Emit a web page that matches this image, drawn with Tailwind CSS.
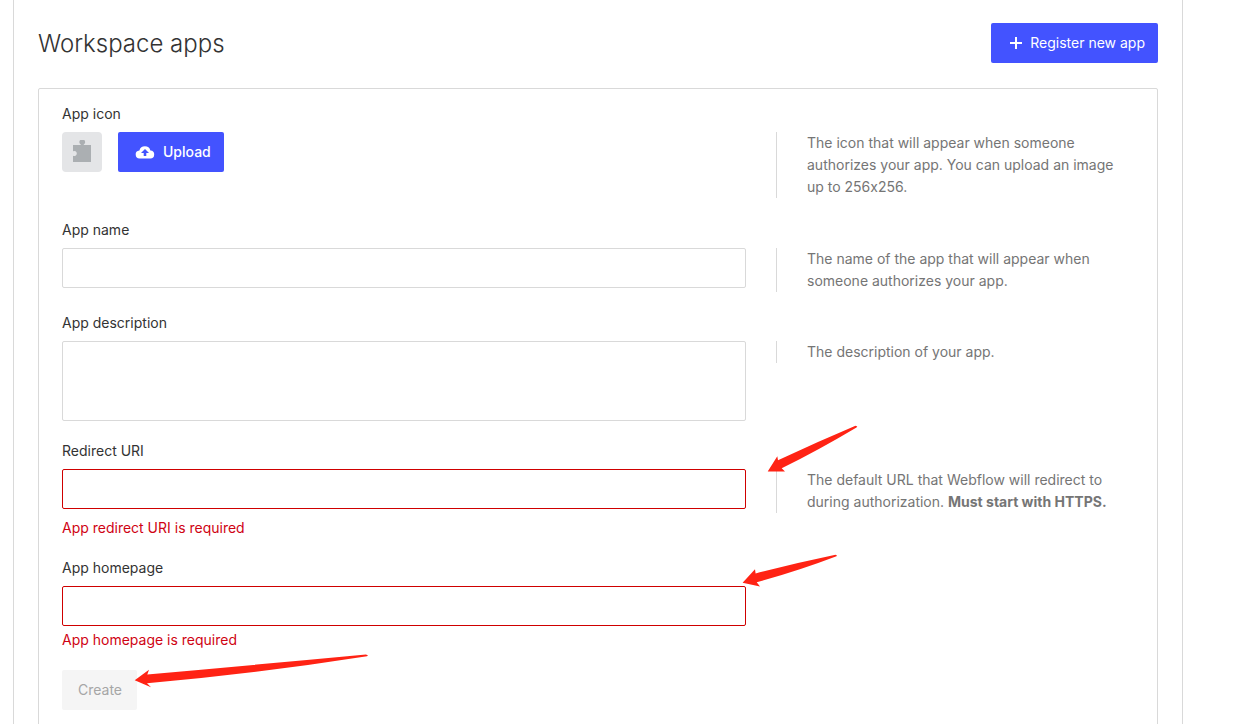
<!DOCTYPE html>
<html lang="en">
  <head>
    <meta charset="UTF-8" />
    <meta name="viewport" content="width=device-width, initial-scale=1.0" />
    <title>Workspace apps</title>
    <script src="https://cdn.jsdelivr.net/npm/@tailwindcss/browser@4"></script>
  </head>
  <body
    class="bg-white font-['Inter',sans-serif] text-sm text-[#333333] overflow-hidden [font-feature-settings:'calt'_0]"
  >
    <main class="ml-[13px] mr-[66px] min-h-screen border-x border-[#d9d9d9] px-6 pt-[23px]">
      <header class="flex items-center justify-between">
        <h1 class="pt-0.5 text-2xl font-light">Workspace apps</h1>
        <button
          type="button"
          class="flex h-10 items-center gap-1.5 rounded-xs bg-[#4353ff] pl-[17px] pr-[13px] text-white hover:bg-[#3545ee]"
        >
          <svg class="size-4" viewBox="0 0 16 16" fill="currentColor" aria-hidden="true">
            <path d="M7 2h2v5h5v2H9v5H7V9H2V7h5z" />
          </svg>
          Register new app
        </button>
      </header>

      <form class="mt-[25px] flex flex-col gap-5 rounded-xs border border-[#d9d9d9] px-[23px] pt-[15px] pb-6">
        <!-- App icon -->
        <div class="min-h-24">
          <label for="upload" class="block leading-5">App icon</label>
          <div class="mt-2 grid grid-cols-[minmax(0,1fr)_358px] items-start gap-[30px]">
            <div class="flex items-center gap-4">
              <div class="flex size-10 items-center justify-center rounded-sm bg-[#e4e5e7]">
                <svg class="h-6 w-5" viewBox="0 0 20 24" fill="#abafb2" aria-hidden="true">
                  <path
                    d="M1 5h7.800V4.600a2.900 2.900 0 1 1 2.900 0V5H19v17H1v-6.200a2.600 2.600 0 1 0 0-4.600z"
                  />
                </svg>
              </div>
              <button
                type="button"
                id="upload"
                class="flex h-10 items-center gap-2 rounded-xs bg-[#4353ff] pl-[17px] pr-[13px] font-medium text-white hover:bg-[#3545ee]"
              >
                <svg class="h-5 w-5" viewBox="0 0 20 20" aria-hidden="true">
                  <path
                    fill="currentColor"
                    d="M5 16.500a4 4 0 0 1-.6-8A5.700 5.700 0 0 1 15.400 8.500a4 4 0 0 1-.4 8z"
                  />
                  <path fill="#4353ff" d="M10 7l4 4h-2.700v3H8.700v-3H6z" />
                </svg>
                Upload
              </button>
            </div>
            <p class="border-l border-[#d9d9d9] pl-[30px] leading-[22px] text-[#757575]">
              The icon that will appear when someone authorizes your app. You can upload an image up to 256x256.
            </p>
          </div>
        </div>

        <!-- App name -->
        <div class="min-h-[73px]">
          <label for="name" class="block leading-5">App name</label>
          <div class="mt-2 grid grid-cols-[minmax(0,1fr)_358px] items-start gap-[30px]">
            <input id="name" type="text" class="h-10 w-full rounded-xs border border-[#d9d9d9] px-3" />
            <p class="border-l border-[#d9d9d9] pl-[30px] leading-[22px] text-[#757575]">
              The name of the app that will appear when someone authorizes your app.
            </p>
          </div>
        </div>

        <!-- App description -->
        <div>
          <label for="description" class="block leading-5">App description</label>
          <div class="mt-2 grid grid-cols-[minmax(0,1fr)_358px] items-start gap-[30px]">
            <textarea
              id="description"
              class="block h-20 w-full resize-none rounded-xs border border-[#d9d9d9] px-3 py-2"
            ></textarea>
            <p class="border-l border-[#d9d9d9] pl-[30px] leading-[22px] text-[#757575]">
              The description of your app.
            </p>
          </div>
        </div>

        <!-- Redirect URI -->
        <div>
          <label for="redirect" class="block leading-5">Redirect URI</label>
          <div class="mt-2 grid grid-cols-[minmax(0,1fr)_358px] items-start gap-[30px]">
            <div class="relative">
              <input
                id="redirect"
                type="url"
                aria-describedby="redirect-error"
                class="block h-10 w-full rounded-xs border border-[#cf0000] px-3"
              />
              <p id="redirect-error" class="mt-[9px] leading-5 text-[#cf0313]">App redirect URI is required</p>
              <svg
                class="pointer-events-none absolute -top-11 left-full ml-[21px] h-12 w-[92px]"
                viewBox="0 0 92 48"
                fill="#ff2314"
                aria-hidden="true"
              >
                <path d="M.7 46.500L10.300 31.300L11 35.300Q50 17 88.500 .8L90.300 1.500L89.500 2.500Q50 26 14.700 43.300L18 46.500z" />
              </svg>
            </div>
            <p class="border-l border-[#d9d9d9] pl-[30px] leading-[22px] text-[#757575]">
              The default URL that Webflow will redirect to during authorization.
              <b>Must start with HTTPS.</b>
            </p>
          </div>
        </div>

        <!-- App homepage -->
        <div>
          <label for="homepage" class="block leading-5">App homepage</label>
          <div class="mt-2 grid grid-cols-[minmax(0,1fr)_358px] items-start gap-[30px]">
            <div class="relative">
              <input
                id="homepage"
                type="url"
                aria-describedby="homepage-error"
                class="block h-10 w-full rounded-xs border border-[#cf0000] px-3"
              />
              <p id="homepage-error" class="mt-1 leading-5 text-[#cf0313]">App homepage is required</p>
              <svg
                class="pointer-events-none absolute -top-8 left-full -ml-1 h-9 w-24"
                viewBox="0 0 96 36"
                fill="#ff2314"
                aria-hidden="true"
              >
                <path d="M.6 28.800L13 15.300L13.600 19.500Q54 9 93.500 .8L95 1.500L94.500 2.300Q56 17 14.700 28.300L18 32.500z" />
              </svg>
            </div>
          </div>
        </div>

        <div class="relative w-fit">
          <button type="submit" disabled class="block h-10 rounded-xs bg-[#f5f5f5] pl-4 pr-[15px] text-[#a6a6a6]">
            Create
          </button>
          <svg
            class="pointer-events-none absolute -top-4 left-full -ml-[3px] h-9 w-[236px]"
            viewBox="0 0 236 36"
            fill="#ff2314"
            aria-hidden="true"
          >
            <path d="M.7 26.300L15 15.800L13.300 20.500Q120 11 232 .5L234 1.500L233 2.300Q120 20 13 29.300L17 33.200z" />
          </svg>
        </div>
      </form>
    </main>
  </body>
</html>
